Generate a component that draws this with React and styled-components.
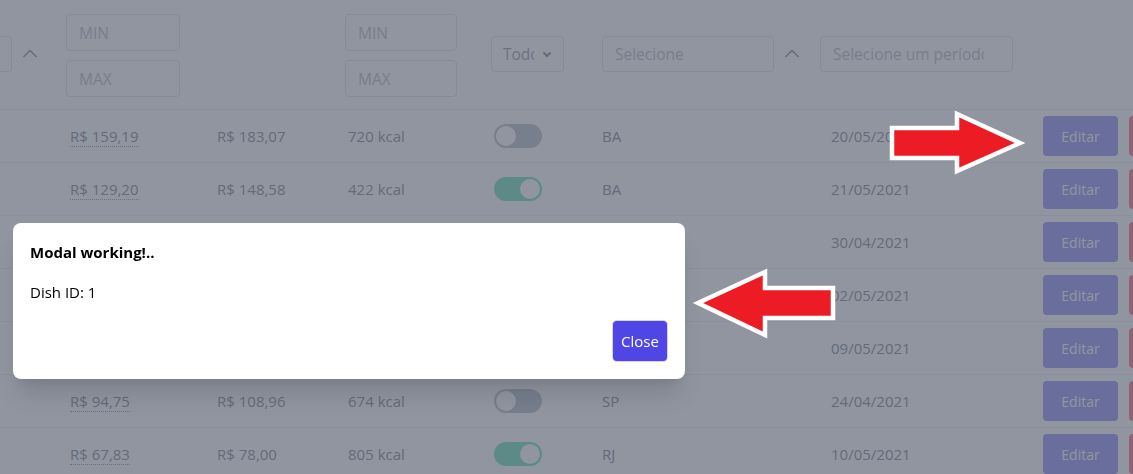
import React, { useLayoutEffect, useRef } from "react";
import styled, { createGlobalStyle } from "styled-components";

const GlobalStyle = createGlobalStyle`
  html, body { margin: 0; padding: 0; background: #fff; overflow: hidden; }
  body { font-family: "Open Sans", "Noto Sans", Arial, sans-serif; color: #4b5563; }
  * { box-sizing: border-box; }
`;

// column widths shared by header and rows
const COLS = "170px 147px 132px 146px 111px 218px 223px 220px";

const Scroller = styled.div`
  width: 100vw;
  overflow-x: auto;
  scrollbar-width: none;
  &::-webkit-scrollbar { display: none; }
`;

const Table = styled.div`
  width: max-content;
`;

const HeadRow = styled.div`
  display: grid;
  grid-template-columns: ${COLS};
  align-items: start;
  height: 110px;
  padding: 14px 0 12px;
  border-bottom: 1px solid #e5e7eb;
`;

const Row = styled.div`
  display: grid;
  grid-template-columns: ${COLS};
  align-items: center;
  height: 53px;
  border-bottom: 1px solid #e5e7eb;
  font-size: 15px;
`;

const Cell = styled.div`
  display: flex;
  align-items: center;
  gap: ${p => p.$gap ?? 0}px;
  padding-left: ${p => p.$pad ?? 8}px;
  margin-top: ${p => p.$top ?? 0}px;
  white-space: nowrap;
`;

const FilterStack = styled.div`
  display: flex;
  flex-direction: column;
  gap: 9px;
`;

const Input = styled.input`
  width: ${p => p.$w}px;
  height: ${p => p.$h ?? 37}px;
  padding: 0 ${p => p.$padR ?? 12}px 0 12px;
  border: 1px solid #d1d5db;
  border-radius: 4px;
  font: 15.5px "Open Sans", "Noto Sans", Arial, sans-serif;
  color: #4b5563;
  background: #fff;
  outline: none;
  &::placeholder { color: #9ca3af; }
`;

const SelectBox = styled.div`
  display: flex;
  align-items: center;
  justify-content: space-between;
  width: ${p => p.$w}px;
  height: 36px;
  padding: 0 11px 0 11px;
  border: 1px solid #d1d5db;
  border-radius: 4px;
  font-size: 15.5px;
  color: #6b7280;
  background: #fff;
`;

const SelectText = styled.span`
  width: ${p => (p.$w ? `${p.$w}px` : "auto")};
  overflow: hidden;
  white-space: nowrap;
`;

const SortIcon = styled.svg`
  width: 16px;
  height: 10px;
  flex: none;
`;

const Price = styled.span`
  border-bottom: 1px dotted #6b7280;
  line-height: 20px;
`;

const Toggle = styled.span`
  position: relative;
  display: inline-block;
  width: 48px;
  height: 24px;
  border-radius: 12px;
  background: ${p => (p.$on ? "#34d399" : "#9ca3af")};
  &::after {
    content: "";
    position: absolute;
    top: 2px;
    left: ${p => (p.$on ? "26px" : "2px")};
    width: 20px;
    height: 20px;
    border-radius: 50%;
    background: #fff;
  }
`;

const ActionButton = styled.button`
  width: 75px;
  height: 40px;
  border: none;
  border-radius: 4px;
  background: ${p => (p.$danger ? "#f43f5e" : "#6366f1")};
  color: #fff;
  font: 14px "Open Sans", "Noto Sans", Arial, sans-serif;
  flex: none;
`;

const Backdrop = styled.div`
  position: fixed;
  inset: 0;
  background: rgba(107, 114, 128, 0.75);
`;

const Dialog = styled.div`
  position: fixed;
  left: 13px;
  top: 223px;
  width: 672px;
  height: 156px;
  display: flex;
  flex-direction: column;
  padding: 19px 18px 18px 17px;
  background: #fff;
  border-radius: 8px;
  box-shadow: 0 20px 25px -5px rgba(0, 0, 0, 0.12), 0 10px 10px -5px rgba(0, 0, 0, 0.05);
  color: #000;
  font-size: 15px;
`;

const DialogTitle = styled.h3`
  margin: 0;
  font-size: 15px;
  font-weight: 700;
  line-height: 20px;
`;

const DialogBody = styled.p`
  margin: 20px 0 0;
  line-height: 20px;
`;

const DialogFooter = styled.div`
  margin-top: auto;
  display: flex;
  justify-content: flex-end;
`;

const CloseButton = styled.button`
  width: 54px;
  height: 40px;
  border: none;
  border-radius: 4px;
  background: #4f46e5;
  color: #fff;
  font: 15px "Open Sans", "Noto Sans", Arial, sans-serif;
  box-shadow: 0 0 0 1px #d4d4e4;
`;

const Annotations = styled.svg`
  position: fixed;
  inset: 0;
  pointer-events: none;
`;

const ChevronUp = () => (
  <SortIcon viewBox="0 0 16 10">
    <polyline points="1.5,8 8,1.5 14.5,8" fill="none" stroke="#4b5563" strokeWidth="1.3" />
  </SortIcon>
);

const ChevronDown = () => (
  <svg width="10" height="7" viewBox="0 0 10 7">
    <polyline points="1.5,1.5 5,5 8.5,1.5" fill="none" stroke="#4b5563" strokeWidth="2" />
  </svg>
);

const dishes = [
  { name: "Moqueca", cost: "R$ 159,19", price: "R$ 183,07", kcal: "720 kcal", on: false, uf: "BA", date: "20/05/2021" },
  { name: "Acarajé", cost: "R$ 129,20", price: "R$ 148,58", kcal: "422 kcal", on: true, uf: "BA", date: "21/05/2021" },
  { name: "Tacacá", cost: "R$ 88,40", price: "R$ 101,66", kcal: "390 kcal", on: true, uf: "PA", date: "30/04/2021" },
  { name: "Pequi", cost: "R$ 72,15", price: "R$ 82,97", kcal: "512 kcal", on: false, uf: "GO", date: "02/05/2021" },
  { name: "Barreado", cost: "R$ 110,30", price: "R$ 126,85", kcal: "630 kcal", on: true, uf: "PR", date: "09/05/2021" },
  { name: "Virado", cost: "R$ 94,75", price: "R$ 108,96", kcal: "674 kcal", on: false, uf: "SP", date: "24/04/2021" },
  { name: "Feijoada", cost: "R$ 67,83", price: "R$ 78,00", kcal: "805 kcal", on: true, uf: "RJ", date: "10/05/2021" },
];

export default function App() {
  const scrollRef = useRef();

  useLayoutEffect(() => {
    if (scrollRef.current) scrollRef.current.scrollLeft = 108;
  }, []);

  return (
    <>
      <GlobalStyle />
      <Scroller ref={scrollRef}>
        <Table>
          <HeadRow>
            <Cell $pad={4} $gap={10} $top={22}>
              <SelectBox $w={116}><SelectText>Nome</SelectText></SelectBox>
              <ChevronUp />
            </Cell>
            <Cell $pad={4}>
              <FilterStack>
                <Input $w={114} placeholder="MIN" />
                <Input $w={114} placeholder="MAX" />
              </FilterStack>
            </Cell>
            <Cell />
            <Cell $pad={4}>
              <FilterStack>
                <Input $w={112} placeholder="MIN" />
                <Input $w={112} placeholder="MAX" />
              </FilterStack>
            </Cell>
            <Cell $pad={4} $top={22}>
              <SelectBox $w={73}><SelectText $w={31}>Todos</SelectText><ChevronDown /></SelectBox>
            </Cell>
            <Cell $pad={4} $gap={10} $top={22}>
              <Input $w={172} $h={36} placeholder="Selecione" />
              <ChevronUp />
            </Cell>
            <Cell $pad={4} $top={22}>
              <Input $w={193} $h={36} $padR={28} placeholder="Selecione um período" />
            </Cell>
            <Cell />
          </HeadRow>
          {dishes.map(d => (
            <Row key={d.name}>
              <Cell>{d.name}</Cell>
              <Cell><Price>{d.cost}</Price></Cell>
              <Cell>{d.price}</Cell>
              <Cell $pad={7}>{d.kcal}</Cell>
              <Cell $pad={7}><Toggle $on={d.on} /></Cell>
              <Cell $pad={4}>{d.uf}</Cell>
              <Cell $pad={15}>{d.date}</Cell>
              <Cell $pad={4} $gap={11}>
                <ActionButton>Editar</ActionButton>
                <ActionButton $danger>Excluir</ActionButton>
              </Cell>
            </Row>
          ))}
        </Table>
      </Scroller>

      <Backdrop />
      <Dialog role="dialog">
        <DialogTitle>Modal working!..</DialogTitle>
        <DialogBody>Dish ID: 1</DialogBody>
        <DialogFooter>
          <CloseButton>Close</CloseButton>
        </DialogFooter>
      </Dialog>

      <Annotations width="1133" height="474" viewBox="0 0 1133 474">
        <polygon
          points="892,128 957,128 957,114 1020,143 957,171 957,158 892,158"
          fill="#ed1c24" stroke="#fff" strokeWidth="4.5"
        />
        <polygon
          points="698,303 765,272 765,288 833,288 833,318 765,318 765,335"
          fill="#ed1c24" stroke="#fff" strokeWidth="4.5"
        />
      </Annotations>
    </>
  );
}
